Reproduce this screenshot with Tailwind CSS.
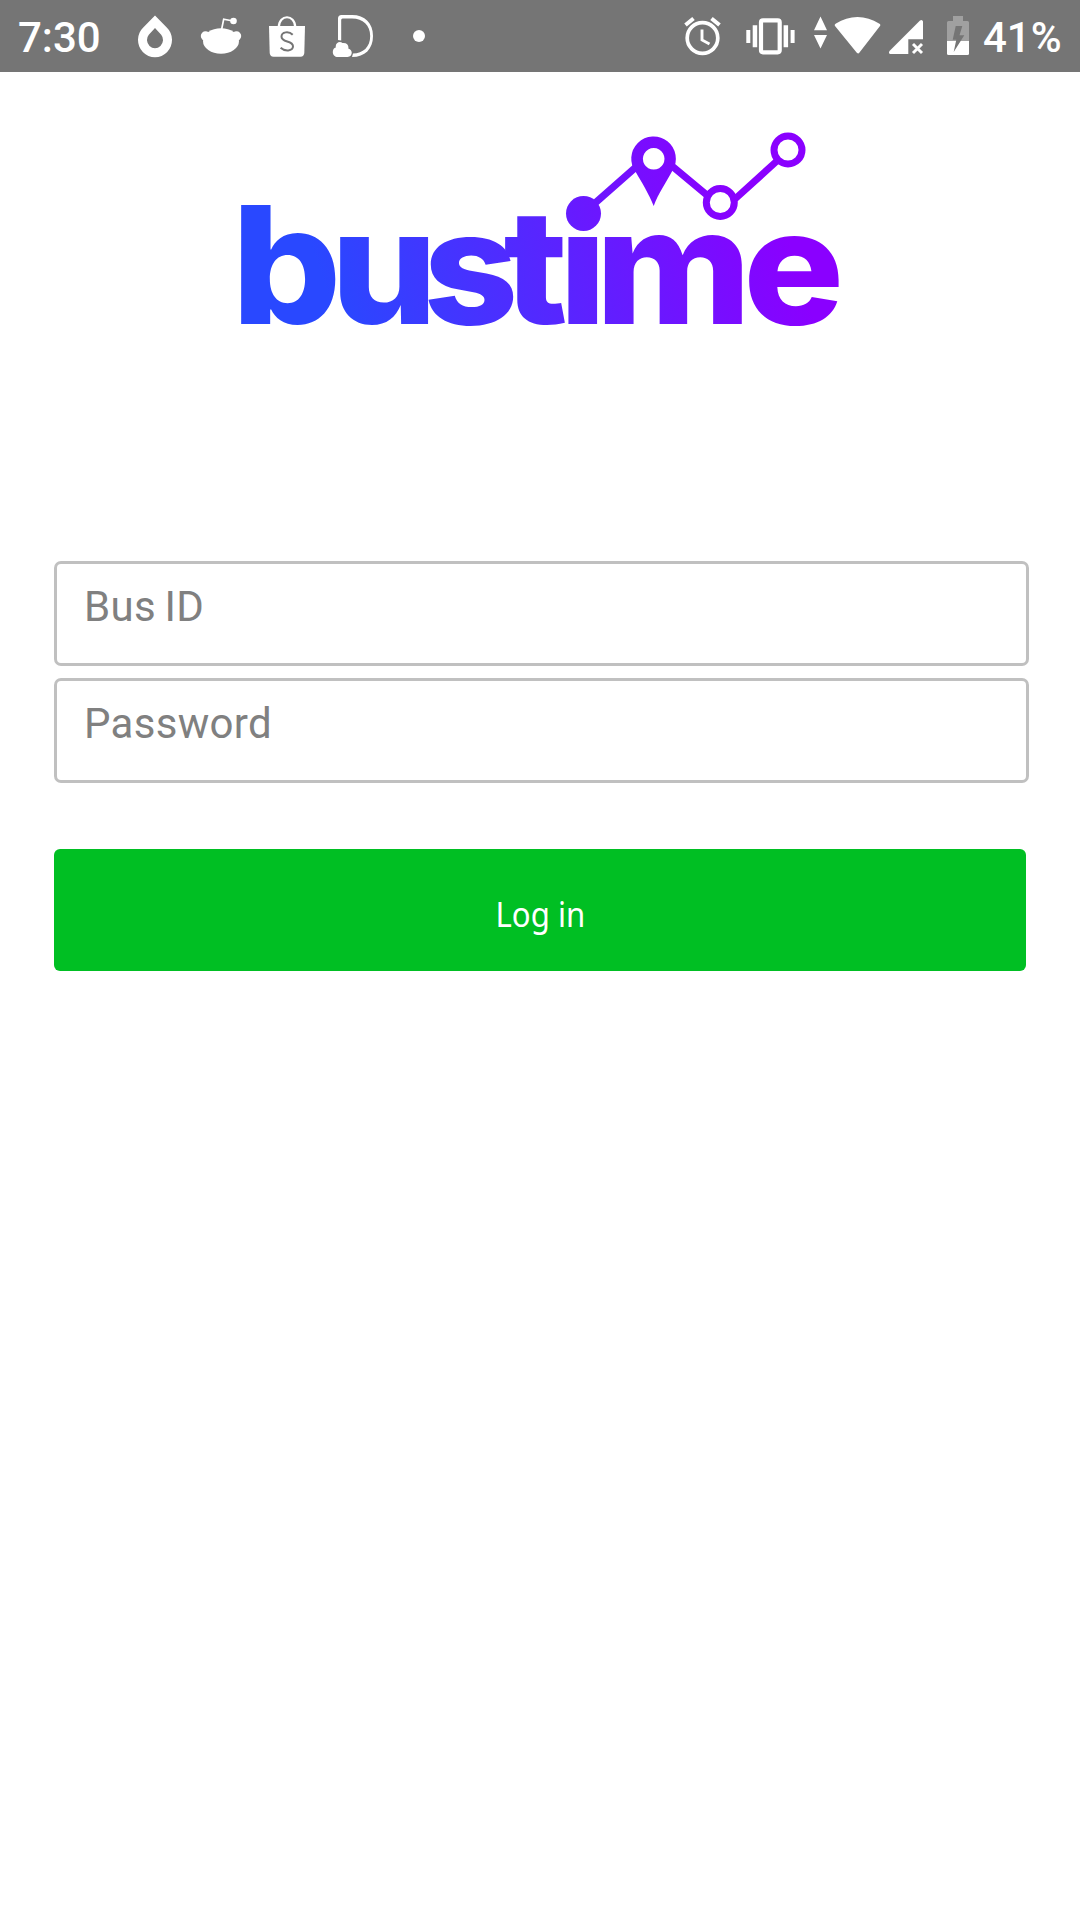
<!DOCTYPE html>
<html lang="en">
<head>
<meta charset="utf-8">
<title>bustime</title>
<script src="https://cdn.jsdelivr.net/npm/@tailwindcss/browser@4"></script>
</head>
<body class="min-h-screen bg-white font-['Roboto',sans-serif]">
<header class="flex h-18 items-center justify-between bg-[#757575] pr-[18px] pl-[18px] text-white">
  <div class="flex items-center">
    <span class="w-[120px] pt-[3px] text-[42px] leading-[69px] font-medium">7:30</span>
    <svg class="h-[72px] w-[34px]" viewBox="138 0 34 72" fill="currentColor"><path fill-rule="evenodd" d="M155 15.500L166.500 27.200A17 17.300 0 1 1 143.500 27.200ZM155 28L148.800 34.800A8 8.200 0 1 0 161.200 34.800Z"/></svg>
    <svg class="ml-[28px] h-[72px] w-[44px]" viewBox="200 0 44 72" fill="currentColor"><ellipse cx="221" cy="41" rx="18" ry="12.700"/><circle cx="205.500" cy="36" r="4.700"/><circle cx="236.500" cy="36" r="4.700"/><circle cx="233.500" cy="21" r="3.300"/><path d="M221.500 30L223.700 19.200L233 21" fill="none" stroke="currentColor" stroke-width="1.700"/></svg>
    <svg class="ml-[24px] h-[72px] w-[38px]" viewBox="268 0 38 72" fill="currentColor"><path d="M269 26H305L304.300 53Q304 56.700 300.500 56.700H273.500Q270 56.700 269.700 53Z"/><path d="M278.800 27C279 14 295 14 295.200 27" fill="none" stroke="currentColor" stroke-width="2.200"/><path d="M292.700 34.700C289 31 281.500 31.500 281.500 36.800C281.500 43 293 40 293 46.300C293 51.500 284.500 51.500 280.600 47.800" fill="none" stroke="#757575" stroke-width="2"/></svg>
    <svg class="ml-[26px] h-[72px] w-[42px]" viewBox="332 0 42 72" fill="currentColor"><path fill-rule="evenodd" d="M338 40V18.500Q338 15 341.500 15H352C365 15 373 23 373 36C373 49 365 57 352 57L353 53.500C363 53.500 370.200 47 370.200 36C370.200 25 363 18.500 352 18.500H342.500Q341.200 18.500 341.200 20V40.500Z"/><path d="M338 57C331.500 57 331.500 48.500 335.800 47.500C335 42.500 340 40.500 342.500 43C347 42.500 349 45.500 348.300 48.500C353.500 50 352.500 57 347.500 57Z"/></svg>
    <svg class="ml-[38px] h-[72px] w-[14px]" viewBox="412 0 14 72" fill="currentColor"><circle cx="419" cy="36" r="6"/></svg>
  </div>
  <div class="flex items-center">
    <svg class="h-[72px] w-[38px]" viewBox="684 0 38 72" fill="none" stroke="currentColor"><circle cx="702.500" cy="38" r="15.300" stroke-width="3.700"/><path d="M702 29.500V40L709.500 44" stroke-width="2.900"/><path d="M685.500 25L693.500 18.500M719.500 25L711.500 18.500" stroke-width="4"/></svg>
    <svg class="ml-[24px] h-[72px] w-[50px]" viewBox="746 0 50 72" fill="currentColor"><rect x="761" y="20.300" width="18.700" height="32" rx="2" fill="none" stroke="currentColor" stroke-width="4.200"/><path d="M746.300 30h4v13h-4zM752.700 25.300h4.500v22h-4.500zM783.600 25.300h4.500v22h-4.500zM790.600 30h4v13h-4z"/></svg>
    <svg class="ml-[16px] h-[72px] w-[72px]" viewBox="812 0 72 72" fill="currentColor"><path d="M820.500 16.500L827 30.300H814ZM814 35H827L820.500 48.500Z"/><path d="M858.300 53.500Q857.500 53.500 856.800 52.700L835 26C834.300 25 835 24.300 836 23.600C849 14.800 866 14.800 879 23.600C880.300 24.500 880.800 25 880 26L859.300 52.700Q858.700 53.500 858.300 53.500Z"/></svg>
    <svg class="ml-[4px] h-[72px] w-[36px]" viewBox="888 0 36 72" fill="currentColor"><path d="M890.500 54Q888 53.500 889.500 51L920 20.500Q922.300 19 923 21.500V39.300H908.300V54Z"/><path d="M913 44L922 53M922 44L913 53" fill="none" stroke="currentColor" stroke-width="2.900"/></svg>
    <svg class="ml-[22px] h-[72px] w-[24px]" viewBox="946 0 24 72"><path d="M953 16H963V21H967.500Q969 21 969 22.500V41H947V22.500Q947 21 948.500 21H953Z" fill="#a0a0a0"/><path d="M947 41H969V53.500Q969 55 967.500 55H948.500Q947 55 947 53.500Z" fill="#fff"/><path d="M955.700 26H962.300L959.500 35.300H964.300L953.700 52L956.300 39.700H952.700Z" fill="#757575"/></svg>
    <span class="ml-[13px] w-[79px] pt-[3px] text-[42px] leading-[69px] font-medium">41%</span>
  </div>
</header>
<main class="px-[54px] pt-12">
  <svg class="mx-auto block h-[220px] w-[640px] overflow-visible" viewBox="220 120 640 220" role="img" aria-label="bustime">
    <defs>
      <linearGradient id="brand" gradientUnits="userSpaceOnUse" x1="320" y1="320" x2="735" y2="190"><stop offset="0" stop-color="#2948ff"/><stop offset="1" stop-color="#8a00ff"/></linearGradient>
    </defs>
    <g fill="url(#brand)">
      <text transform="scale(1.05 1)" x="220.500 315 403.200 479.500 532.500 567.100 707.900" y="324" font-family="Inter, sans-serif" font-weight="830" font-size="160"><tspan font-size="164">b</tspan>u<tspan font-weight="780" font-size="158">s</tspan>time</text>
      <circle cx="583.500" cy="213.500" r="17.500"/>
      <path fill-rule="evenodd" d="M653.700 206C649 194 641.500 182 636 172.500A22.300 22.300 0 1 1 672.500 170.500C667 181 658 194 653.700 206ZM653.700 148a10.800 10.800 0 1 0 .01 0Z"/>
    </g>
    <g fill="none" stroke="url(#brand)" stroke-width="7">
      <path d="M594 204L636 167M672 166L708 196M735 199L778 160"/>
      <circle cx="720.300" cy="202.500" r="14"/><circle cx="788" cy="150" r="14"/>
    </g>
  </svg>
  <form class="mt-[221px] flex flex-col">
    <input type="text" placeholder="Bus ID" class="h-[105px] w-[975px] rounded-[7px] border-3 border-[#c0c0c0] pr-[28px] pl-[27px] pb-[14px] text-[42px] tracking-[0.3px] [word-spacing:-2px] placeholder:text-[#808080]">
    <input type="password" placeholder="Password" class="mt-3 h-[105px] w-[975px] rounded-[7px] border-3 border-[#c0c0c0] pr-[28px] pl-[27px] pb-[14px] text-[42px] tracking-[0.3px] placeholder:text-[#808080]">
    <button type="button" class="mt-[66px] flex h-[122px] w-[972px] items-center justify-center rounded-[6px] bg-[#00bf23] pt-[8px] font-['Noto_Sans',sans-serif] text-[35px] text-white"><span class="inline-block scale-x-[.89]">Log in</span></button>
  </form>
</main>
</body>
</html>
